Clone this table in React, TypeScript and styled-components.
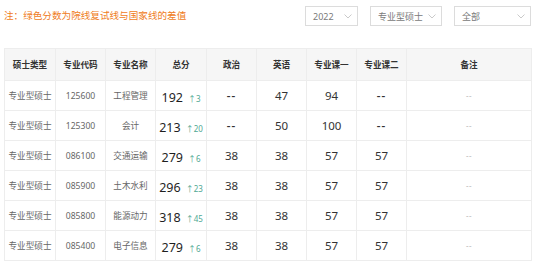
import styled, {createGlobalStyle} from "styled-components";

type Row = {
  type: string;
  code: string;
  name: string;
  total: number;
  diff: number;
  politics: string;
  english: string;
  course1: string;
  course2: string;
};

const rows: Row[] = [
  {type: "专业型硕士", code: "125600", name: "工程管理", total: 192, diff: 3, politics: "--", english: "47", course1: "94", course2: "--"},
  {type: "专业型硕士", code: "125300", name: "会计", total: 213, diff: 20, politics: "--", english: "50", course1: "100", course2: "--"},
  {type: "专业型硕士", code: "086100", name: "交通运输", total: 279, diff: 6, politics: "38", english: "38", course1: "57", course2: "57"},
  {type: "专业型硕士", code: "085900", name: "土木水利", total: 296, diff: 23, politics: "38", english: "38", course1: "57", course2: "57"},
  {type: "专业型硕士", code: "085800", name: "能源动力", total: 318, diff: 45, politics: "38", english: "38", course1: "57", course2: "57"},
  {type: "专业型硕士", code: "085400", name: "电子信息", total: 279, diff: 6, politics: "38", english: "38", course1: "57", course2: "57"},
];

const columns = [
  {title: "硕士类型", width: 51},
  {title: "专业代码", width: 50},
  {title: "专业名称", width: 50},
  {title: "总分", width: 51},
  {title: "政治", width: 50},
  {title: "英语", width: 50},
  {title: "专业课一", width: 50},
  {title: "专业课二", width: 50},
  {title: "备注", width: 125},
];

const GlobalStyle = createGlobalStyle`
  body {
    margin: 0;
    background: #ffffff;
    font-family: "Noto Sans", "Noto Sans CJK SC", sans-serif;
  }
`;

const Chevron = () => (
  <svg width="8" height="5" viewBox="0 0 8 5">
    <path d="M0.5 0.5 L4 4 L7.5 0.5" fill="none" stroke="#c4c4c4" strokeWidth="0.9" />
  </svg>
);

const App = () => {
  return (
    <Page>
      <GlobalStyle />
      <Toolbar>
        <Note>注：绿色分数为院线复试线与国家线的差值</Note>
        <Filters>
          <Select $width={53}>
            <span>2022</span>
            <Chevron />
          </Select>
          <Select $width={72}>
            <span>专业型硕士</span>
            <Chevron />
          </Select>
          <Select $width={77}>
            <span>全部</span>
            <Chevron />
          </Select>
        </Filters>
      </Toolbar>
      <Table>
        <colgroup>
          {columns.map((c) => (
            <col key={c.title} style={{width: c.width}} />
          ))}
        </colgroup>
        <thead>
          <tr>
            {columns.map((c) => (
              <HeadCell key={c.title}>{c.title}</HeadCell>
            ))}
          </tr>
        </thead>
        <tbody>
          {rows.map((r) => (
            <tr key={r.code}>
              <TextCell>{r.type}</TextCell>
              <TextCell>{r.code}</TextCell>
              <TextCell>{r.name}</TextCell>
              <Cell>
                <Total>{r.total}</Total>
                <Diff>↑{r.diff}</Diff>
              </Cell>
              <ScoreCell $dash={r.politics === "--"}>{r.politics}</ScoreCell>
              <ScoreCell $dash={r.english === "--"}>{r.english}</ScoreCell>
              <ScoreCell $dash={r.course1 === "--"}>{r.course1}</ScoreCell>
              <ScoreCell $dash={r.course2 === "--"}>{r.course2}</ScoreCell>
              <RemarkCell>--</RemarkCell>
            </tr>
          ))}
        </tbody>
      </Table>
    </Page>
  );
};

const Page = styled.div`
  width: 537px;
  padding: 0 6px 0 4px;
  box-sizing: border-box;
`;

const Toolbar = styled.div`
  height: 48px;
  display: flex;
  align-items: flex-start;
  justify-content: space-between;
`;

const Note = styled.div`
  margin-top: 9px;
  font-size: 9.6px;
  line-height: 13px;
  color: #ef7c22;
`;

const Filters = styled.div`
  display: flex;
  gap: 12px;
  margin-top: 6px;
`;

const Select = styled.div<{$width: number}>`
  width: ${(p) => p.$width}px;
  height: 20px;
  box-sizing: border-box;
  border: 1px solid #dcdcdc;
  display: flex;
  align-items: center;
  justify-content: space-between;
  padding: 0 5px 0 7px;
  font-size: 9px;
  color: #7a7a7a;
`;

const Table = styled.table`
  width: 527px;
  border-collapse: collapse;
  table-layout: fixed;
  border-top: 1px solid #ededed;
`;

const Cell = styled.td`
  height: 29px;
  padding: 0;
  text-align: center;
  border: 1px solid #ededed;
  white-space: nowrap;
`;

const HeadCell = styled.th`
  height: 31px;
  padding: 0;
  background: #f6f6f6;
  border: 1px solid #ededed;
  font-size: 8.6px;
  font-weight: 700;
  color: #333333;
`;

const TextCell = styled(Cell)`
  font-size: 8.6px;
  color: #666666;
`;

const Total = styled.span`
  font-size: 12.5px;
  color: #1f1f1f;
`;

const Diff = styled.span`
  margin-left: 5px;
  font-size: 8px;
  color: #4fa893;
`;

const ScoreCell = styled(Cell)<{$dash: boolean}>`
  font-size: 11.5px;
  letter-spacing: ${(p) => (p.$dash ? "1px" : "0")};
  font-weight: ${(p) => (p.$dash ? 600 : 400)};
  color: #333333;
`;

const RemarkCell = styled(Cell)`
  font-size: 8px;
  letter-spacing: 0.5px;
  color: #bdbdbd;
`;

export default App;
